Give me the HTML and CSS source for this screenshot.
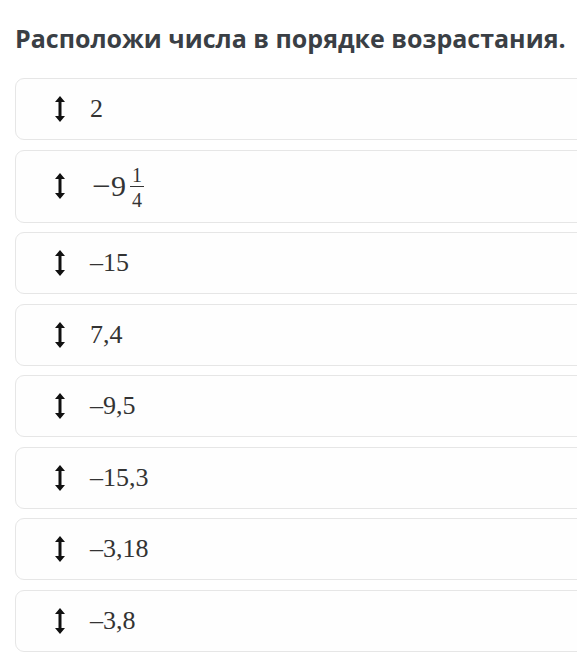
FILE: index.html
```html
<!DOCTYPE html>
<html lang="ru">
<head>
<meta charset="utf-8">
<link rel="stylesheet" href="styles.css">
</head>
<body>
<div class="page">
  <h1 class="title">Расположи числа в порядке возрастания.</h1>
  <ul class="list">
    <li class="card"><span class="handle"><svg viewBox="0 0 10 26" width="10" height="26"><path d="M5 0 L10 6 L6.5 6 L6.5 20 L10 20 L5 26 L0 20 L3.5 20 L3.5 6 L0 6 Z" fill="#111"/></svg></span><span class="val">2</span></li>
    <li class="card tall"><span class="handle"><svg viewBox="0 0 10 26" width="10" height="26"><path d="M5 0 L10 6 L6.5 6 L6.5 20 L10 20 L5 26 L0 20 L3.5 20 L3.5 6 L0 6 Z" fill="#111"/></svg></span><span class="val big"><span class="minus">−</span>9<span class="frac"><span class="num">1</span><span class="den">4</span></span></span></li>
    <li class="card"><span class="handle"><svg viewBox="0 0 10 26" width="10" height="26"><path d="M5 0 L10 6 L6.5 6 L6.5 20 L10 20 L5 26 L0 20 L3.5 20 L3.5 6 L0 6 Z" fill="#111"/></svg></span><span class="val">–15</span></li>
    <li class="card"><span class="handle"><svg viewBox="0 0 10 26" width="10" height="26"><path d="M5 0 L10 6 L6.5 6 L6.5 20 L10 20 L5 26 L0 20 L3.5 20 L3.5 6 L0 6 Z" fill="#111"/></svg></span><span class="val">7,4</span></li>
    <li class="card"><span class="handle"><svg viewBox="0 0 10 26" width="10" height="26"><path d="M5 0 L10 6 L6.5 6 L6.5 20 L10 20 L5 26 L0 20 L3.5 20 L3.5 6 L0 6 Z" fill="#111"/></svg></span><span class="val">–9,5</span></li>
    <li class="card"><span class="handle"><svg viewBox="0 0 10 26" width="10" height="26"><path d="M5 0 L10 6 L6.5 6 L6.5 20 L10 20 L5 26 L0 20 L3.5 20 L3.5 6 L0 6 Z" fill="#111"/></svg></span><span class="val">–15,3</span></li>
    <li class="card"><span class="handle"><svg viewBox="0 0 10 26" width="10" height="26"><path d="M5 0 L10 6 L6.5 6 L6.5 20 L10 20 L5 26 L0 20 L3.5 20 L3.5 6 L0 6 Z" fill="#111"/></svg></span><span class="val">–3,18</span></li>
    <li class="card"><span class="handle"><svg viewBox="0 0 10 26" width="10" height="26"><path d="M5 0 L10 6 L6.5 6 L6.5 20 L10 20 L5 26 L0 20 L3.5 20 L3.5 6 L0 6 Z" fill="#111"/></svg></span><span class="val">–3,8</span></li>
  </ul>
</div>
</body>
</html>
```

FILE: styles.css
```css
html, body {
  margin: 0;
  padding: 0;
  background: #ffffff;
  overflow: hidden;
}

.page {
  padding: 18px 0 0 15px;
  width: 600px;
}

.title {
  margin: 0;
  font-family: "Open Sans", "Noto Sans", sans-serif;
  font-weight: 700;
  font-size: 25px;
  line-height: 40px;
  color: #3a3f45;
  white-space: nowrap;
}

.list {
  list-style: none;
  margin: 20px 0 0 0;
  padding: 0;
  display: flex;
  flex-direction: column;
  gap: 9.5px;
}

.card {
  box-sizing: border-box;
  height: 62px;
  width: 600px;
  border: 1px solid #e6e6e6;
  border-radius: 9px;
  background: #fefefe;
  display: flex;
  align-items: center;
  padding-left: 39px;
}

.card.tall {
  height: 73px;
}

.handle {
  display: flex;
  width: 10px;
  height: 26px;
  margin-right: 25px;
}

.val {
  font-family: "Liberation Serif", "DejaVu Serif", serif;
  font-size: 26px;
  color: #333333;
  display: inline-flex;
  align-items: center;
}

.val.big {
  font-size: 30px;
}

.minus {
  display: inline-block;
  margin-left: 3px;
  margin-right: 1px;
  transform: scaleX(1.1);
}

.frac {
  display: inline-flex;
  flex-direction: column;
  align-items: center;
  margin-left: 4px;
  margin-top: 3px;
  font-size: 20px;
  line-height: 18px;
}

.num {
  padding: 0 2px 2px;
  border-bottom: 1px solid #333333;
}

.den {
  padding-top: 4px;
}
```
